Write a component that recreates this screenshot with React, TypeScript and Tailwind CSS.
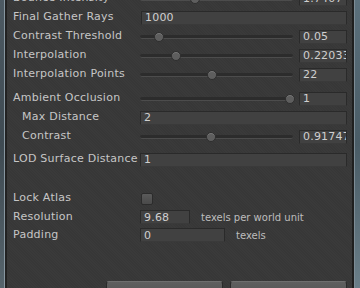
import React from "react";

const font = { fontFamily: '"DejaVu Sans", Verdana, sans-serif' };

function Field({ value, w }: { value: string; w: string }) {
  return (
    <div
      className={`${w} h-[14px] bg-[#414141] border border-[#2a2a2a] border-b-[#3a3a3a] flex items-center pl-[3px] overflow-hidden whitespace-nowrap text-[11px] text-[#cfcfcf] leading-none tracking-[0.2px]`}
    >
      {value}
    </div>
  );
}

function Slider({ knob, value }: { knob: number; value: string }) {
  return (
    <div className="flex items-center flex-1">
      <div className="relative w-[153px] h-[10px] flex items-center">
        <div className="w-full h-[4px] rounded-full bg-[#2c2c2c] border-b border-[#4c4c4c]" />
        <div
          className="absolute top-0 w-[10px] h-[10px] rounded-full bg-[#5e5e5e] border border-[#2e2e2e] shadow-[inset_0_1px_0_#7a7a7a]"
          style={{ left: knob - 5 }}
        />
      </div>
      <div className="ml-[6px]">
        <Field value={value} w="w-[48px]" />
      </div>
    </div>
  );
}

function Row({
  label,
  indent,
  h = "h-[19px]",
  extra = "",
  children,
}: {
  label: string;
  indent?: boolean;
  h?: string;
  extra?: string;
  children: React.ReactNode;
}) {
  return (
    <div className={`flex items-center ${h} ${extra}`}>
      <div className={`w-[127px] shrink-0 whitespace-nowrap tracking-[0.25px] ${indent ? "pl-[9px]" : ""}`}>{label}</div>
      <div className="flex items-center flex-1">{children}</div>
    </div>
  );
}

export default function App() {
  return (
    <div
      className="w-[360px] h-[288px] overflow-hidden flex bg-[#383838] text-[11px] text-[#c6c6c6]"
      style={font}
    >
      <div className="w-[4px] bg-gradient-to-b from-[#4d5a63] via-[#3e4a52] to-[#56646c]" />
      <div className="w-[1px] bg-[#8796a0]" />
      <div className="w-[2px] bg-[#222222]" />
      <div className="flex-1 flex flex-col pl-[6px] pr-[5px] bg-[#383838] bg-[repeating-linear-gradient(45deg,#373737_0px,#373737_1px,#3a3a3a_1px,#3a3a3a_2px)]">
        <div className="mt-[-11px]">
          <Row label="Bounce Intensity">
            <Slider knob={55} value="1.7407" />
          </Row>
          <Row label="Final Gather Rays">
            <div className="ml-[1px]">
              <Field value="1000" w="w-[206px]" />
            </div>
          </Row>
          <Row label="Contrast Threshold">
            <Slider knob={19} value="0.05" />
          </Row>
          <Row label="Interpolation">
            <Slider knob={36} value="0.22033" />
          </Row>
          <Row label="Interpolation Points">
            <Slider knob={72} value="22" />
          </Row>
          <Row label="Ambient Occlusion" extra="mt-[5px]">
            <Slider knob={150} value="1" />
          </Row>
          <Row label="Max Distance" indent>
            <Field value="2" w="w-[207px]" />
          </Row>
          <Row label="Contrast" indent>
            <Slider knob={71} value="0.91747" />
          </Row>
          <Row label="LOD Surface Distance" extra="mt-[4px]">
            <Field value="1" w="w-[207px]" />
          </Row>
          <Row label="Lock Atlas" extra="mt-[20px]">
            <div className="ml-[1px] w-[12px] h-[12px] rounded-[2px] bg-gradient-to-b from-[#5a5a5a] to-[#4a4a4a] border border-[#2c2c2c]" />
          </Row>
          <Row label="Resolution" h="h-[18px]">
            <Field value="9.68" w="w-[50px]" />
            <span className="ml-[11px] text-[10px] text-[#bdbdbd]">texels per world unit</span>
          </Row>
          <Row label="Padding" h="h-[18px]">
            <Field value="0" w="w-[85px]" />
            <span className="ml-[11px] text-[10px] text-[#bdbdbd]">texels</span>
          </Row>
          <div className="flex mt-[37px] pl-[93px] gap-[7px]">
            <div className="w-[117px] h-[18px] rounded-t-[3px] bg-gradient-to-b from-[#5f5f5f] to-[#525252] border border-[#2a2a2a] border-t-[#6e6e6e] flex justify-center pt-[4px] text-[#d0d0d0]">
              Clear
            </div>
            <div className="w-[117px] h-[18px] rounded-t-[3px] bg-gradient-to-b from-[#5f5f5f] to-[#525252] border border-[#2a2a2a] border-t-[#6e6e6e] flex justify-center pt-[4px] text-[#d0d0d0]">
              Bake Scene
            </div>
          </div>
        </div>
      </div>
      <div className="w-[2px] bg-[#1f1f1f]" />
      <div className="w-[1px] bg-[#7d8c95]" />
      <div className="w-[5px] bg-gradient-to-b from-[#5b707c] via-[#4a5c66] to-[#6a7e88]" />
    </div>
  );
}
